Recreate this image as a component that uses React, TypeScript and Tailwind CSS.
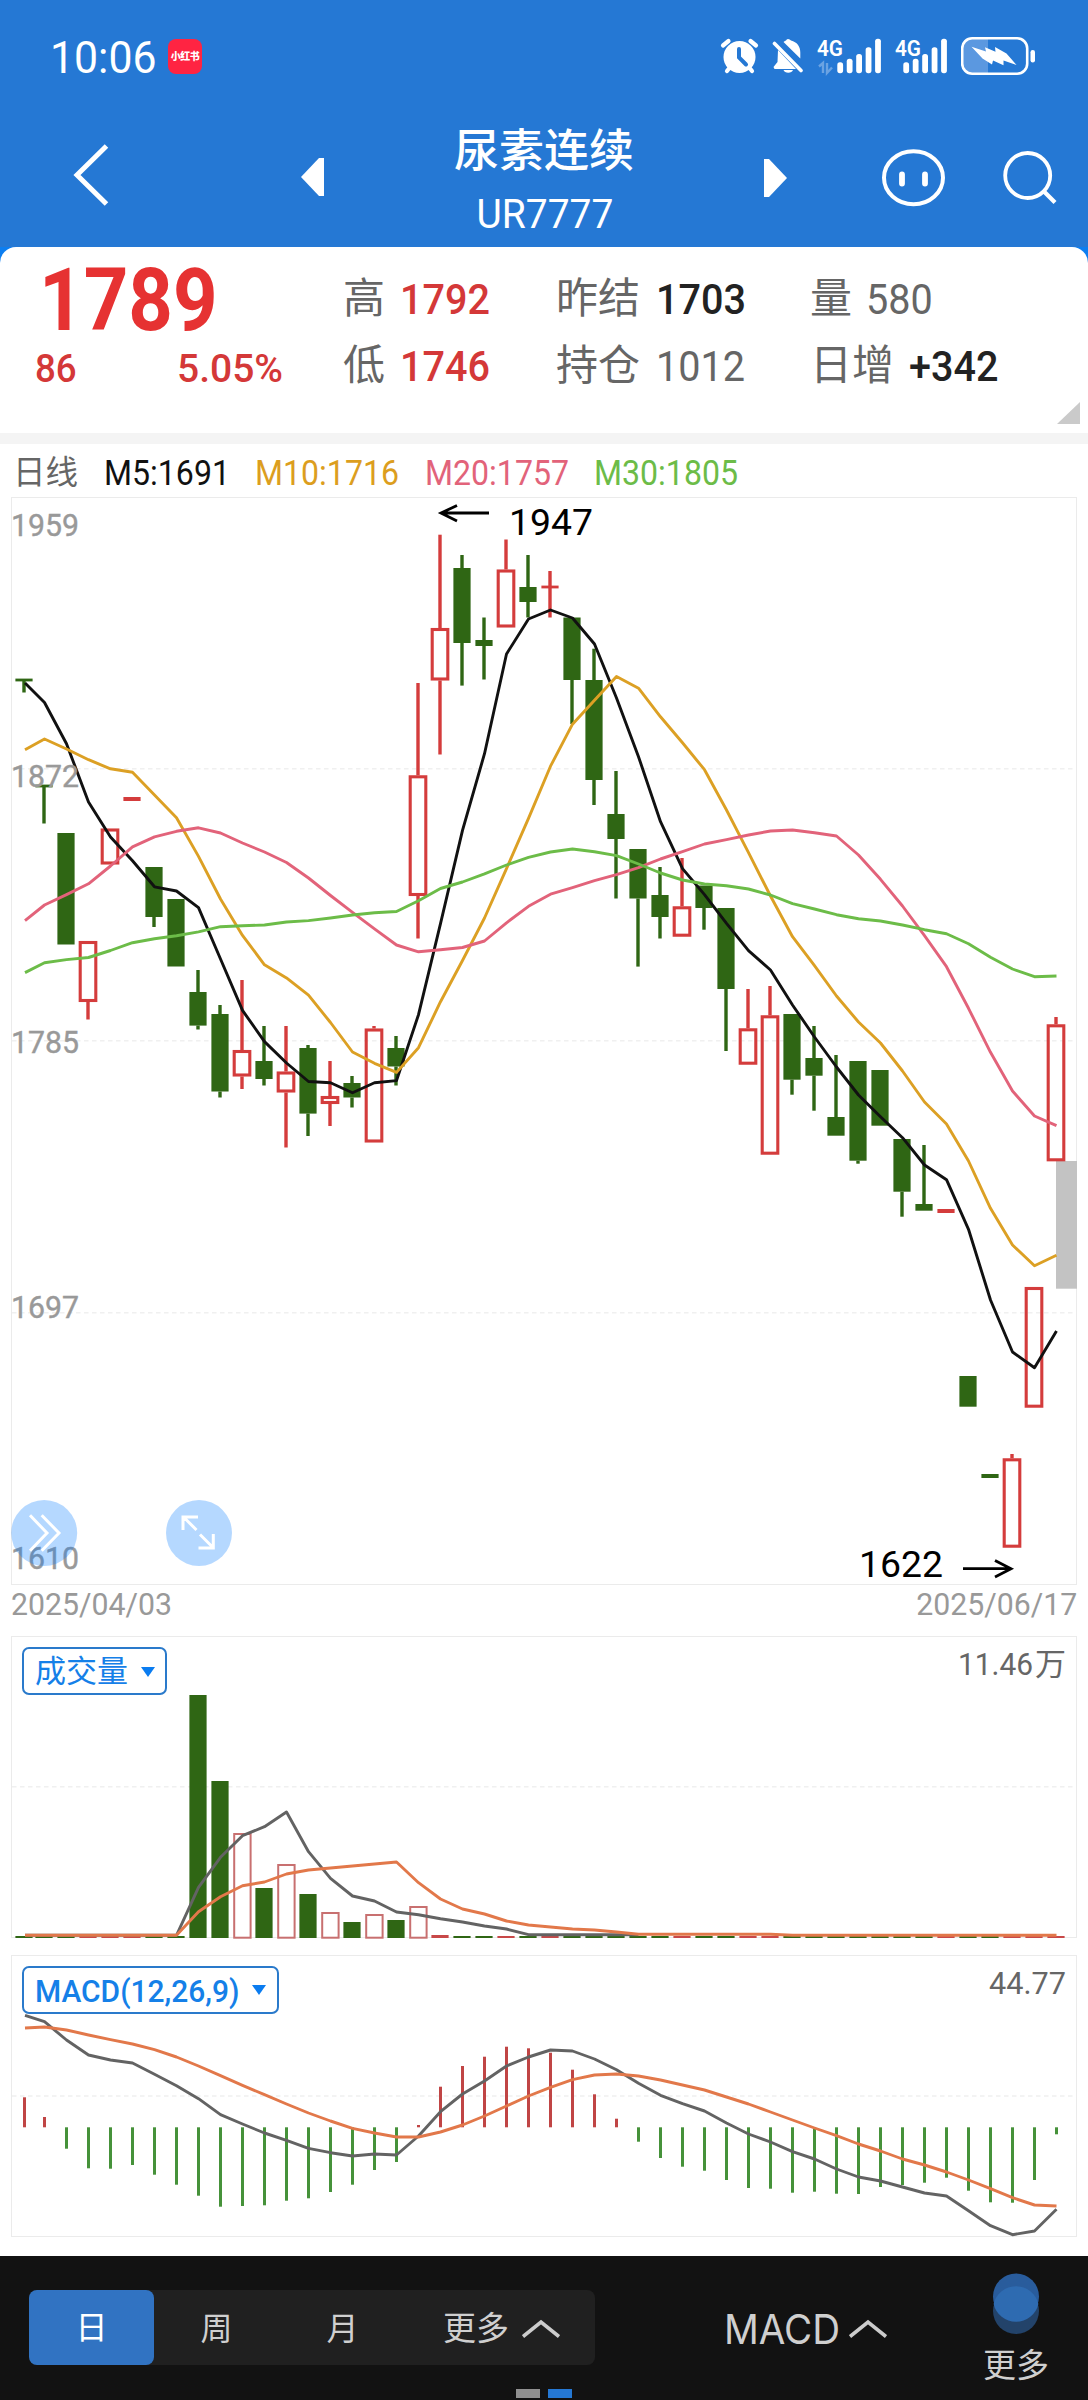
import React from "react";

const up = "#d43c3c";
const down = "#2f6614";

// Horizontal centre of the nth trading day.
const px = (i: number) => (i === 0 ? 24 : 22 + 22 * i);

// [isUp, high, bodyTop, bodyBottom, low] in chart pixels; bodyTop === bodyBottom is a flat day.
type Candle = [number, number, number, number, number];
const candles: Candle[] = [
  [0, 680, 680, 680, 692.5], [0, 786, 786, 786, 823.5], [0, 833, 833, 944.5, 944.5], [1, 941, 941, 1002, 1019.5],
  [1, 828.5, 828.5, 864.5, 864.5], [1, 799, 799, 799, 799], [0, 867, 867, 917, 927], [0, 899, 899, 966.5, 966.5],
  [0, 970, 992, 1025.6, 1029.5], [0, 1005, 1014, 1091.5, 1097.5], [1, 980, 1050, 1076.5, 1089], [0, 1026, 1061, 1079, 1085.5],
  [1, 1026, 1071.5, 1092.5, 1147.5], [0, 1045, 1048, 1113.6, 1136], [1, 1061, 1096, 1104, 1126], [0, 1076, 1083, 1097.5, 1107.5],
  [1, 1026, 1028.5, 1142.5, 1142.5], [0, 1036, 1048, 1066.5, 1085.5], [1, 683, 775.3, 896, 938.5], [1, 534.7, 628, 680.5, 754.5],
  [0, 555, 568, 643, 685.6], [0, 617.5, 640, 646, 679.5], [1, 539.5, 569.5, 627.5, 627.5], [0, 555, 587, 602, 617.5],
  [1, 571, 587, 587, 617.5], [0, 617.5, 617.5, 680, 724], [0, 648.7, 680, 780, 805], [0, 771, 814, 839, 898.5],
  [0, 849, 849, 898.5, 966.6], [0, 867, 895, 917, 938.5], [1, 858, 906.3, 936.7, 936.7], [0, 885.5, 885.5, 908, 929.7],
  [0, 908, 908, 989, 1051], [1, 989, 1028.3, 1064.7, 1064.7], [1, 986, 1015.3, 1154.7, 1154.7], [0, 1014, 1014, 1079.7, 1094.7],
  [0, 1026, 1058, 1075.7, 1110.7], [0, 1055, 1117, 1135.7, 1135.7], [0, 1061, 1061, 1160.7, 1163.7], [0, 1070, 1070, 1125.7, 1125.7],
  [0, 1139, 1139, 1191.7, 1216.7], [0, 1145, 1204, 1210.7, 1210.7], [1, 1211, 1211, 1211, 1211], [0, 1376, 1376, 1406.7, 1406.7],
  [0, 1476, 1476, 1476, 1476], [1, 1454, 1458.3, 1547.7, 1547.7], [1, 1287, 1287, 1407.7, 1407.7], [1, 1017, 1024.3, 1161.3, 1161.3],
];

const ma5 = [683, 702.5, 743.7, 802, 837, 860.8, 886.8, 891, 907.6, 959, 1010.4, 1041.6, 1063, 1081.5, 1082.8, 1092.8, 1082.8, 1080.6, 1014.7, 923.7, 830.4, 753.7, 654, 619, 610, 618, 644, 698, 756.7, 821.7, 868.6, 894.6, 923.3, 950.7, 970, 1005, 1037, 1067, 1095, 1116.7, 1137.7, 1165, 1179.7, 1229.3, 1300, 1352, 1367.7, 1331];
const ma10 = [749.8, 739, 749, 759.7, 768.8, 772.3, 794.9, 817.8, 856.4, 899, 935.4, 964.8, 977.9, 995.2, 1022.5, 1052, 1063.3, 1072.4, 1047.7, 1001.7, 960.5, 918, 868.6, 818.3, 766.2, 724.2, 700.3, 676.5, 688.2, 716.8, 742.8, 769.7, 810, 852.7, 896, 936.7, 965.7, 996, 1022, 1043, 1071, 1102, 1124, 1161, 1208.3, 1245, 1265.7, 1255.3];
const ma20 = [920.6, 905, 894.6, 883.8, 866, 846.9, 836.9, 831.3, 827.8, 833, 843, 852, 862.5, 878, 895.5, 912.4, 928.9, 945, 951.8, 949.7, 947.5, 941, 922.8, 906.3, 894.2, 887.7, 880.7, 874.6, 867.7, 859, 851.7, 844, 839.7, 835, 831, 830, 832.7, 836, 855, 879.3, 906, 935.7, 966.7, 1008.3, 1052.3, 1091, 1116, 1125.7];
const ma30 = [972.6, 962.7, 959.6, 957.5, 950.5, 942.7, 938.8, 935.8, 931.9, 926.7, 925.8, 925, 922, 920.6, 918, 915, 912.8, 911.5, 900.7, 888.5, 882, 873.8, 865, 857.3, 852, 849, 851.7, 855.6, 864, 873, 880, 884, 885.7, 889, 895, 903.7, 909, 914.7, 918.7, 921, 925, 929.7, 933.7, 943.7, 957.3, 969, 976.7, 976];

const volTops: Record<number, number> = { 8: 1695, 9: 1781, 10: 1833, 11: 1888, 12: 1864, 13: 1894, 14: 1912, 15: 1922, 16: 1914, 17: 1920, 18: 1906, 19: 1935 };
const volMa5 = [1935.3, 1935.3, 1935.3, 1935.3, 1935.3, 1935.3, 1935.3, 1935.3, 1887.3, 1857.3, 1835.7, 1826.7, 1812, 1851.7, 1878.3, 1896, 1901, 1912, 1914.7, 1918.7, 1922, 1926, 1929, 1934.7, 1934.7, 1934.7, 1934.7, 1934.7, 1934.7];
const volMa10 = [1935.3, 1935.3, 1935.3, 1935.3, 1935.3, 1935.3, 1935.3, 1935.3, 1911.7, 1896.7, 1885.7, 1882, 1874, 1870, 1868, 1866, 1864, 1862, 1882.7, 1899, 1909, 1914, 1921, 1925, 1927, 1929, 1930, 1932, 1934.3, 1934.3, 1934.3, 1934.3, 1934.3, 1934.3, 1934.3, 1935.3, 1935.3, 1935.3, 1935.3, 1935.3, 1935.3, 1935.3, 1935.3, 1935.3, 1935.3, 1935.3, 1935.3, 1935.3];

const zero = 2127.3;
const hist = [2097.3, 2117, 2148.7, 2168.3, 2168.7, 2165, 2174.7, 2184.7, 2195.7, 2206.7, 2206, 2205.3, 2200.7, 2198.3, 2192, 2184.7, 2170, 2162, 2125, 2086.7, 2066, 2056.7, 2046.7, 2048.3, 2052.7, 2069.7, 2094.3, 2118.7, 2141.7, 2158, 2166.7, 2170.7, 2180, 2188, 2188.7, 2192.7, 2191.7, 2193.7, 2194, 2187, 2185, 2182.7, 2177.7, 2190.7, 2202.3, 2202.7, 2180, 2134.3];
const dif = [2015.3, 2021.7, 2040, 2055, 2060, 2063, 2074.3, 2085.7, 2098.7, 2114.7, 2124, 2133, 2140.3, 2148.3, 2152.7, 2156, 2154, 2155, 2136, 2111.7, 2094, 2081, 2066, 2057, 2050, 2051, 2059, 2069.7, 2083.3, 2095.3, 2103.7, 2111, 2123, 2134, 2142, 2151.7, 2159, 2169, 2177, 2181, 2187, 2193, 2196, 2210.7, 2225.7, 2234.7, 2231, 2209.3];
const dea = [2028, 2027, 2030, 2035, 2039.7, 2044, 2049.7, 2057, 2066, 2075.7, 2085.3, 2094.7, 2104, 2113, 2121, 2128.3, 2133, 2137, 2137, 2132, 2125, 2116, 2106, 2096, 2087.3, 2079.7, 2075, 2074, 2076, 2080, 2085, 2090, 2097, 2104, 2112, 2120, 2128, 2135.7, 2144, 2151, 2159, 2165, 2172, 2180, 2188.7, 2197.7, 2205, 2206];

function Line({ data, color, width = 2.9 }: { data: number[]; color: string; width?: number }) {
  return (
    <polyline
      points={data.map((y, i) => `${px(i) + (i === 0 ? 1 : 0.5)},${y}`).join(" ")}
      fill="none"
      stroke={color}
      strokeWidth={width}
      strokeLinejoin="round"
    />
  );
}

function Frame({ top, bottom, grid }: { top: number; bottom: number; grid: number[] }) {
  return (
    <g fill="none" stroke="#ebebeb">
      <rect x={11.5} y={top} width={1065} height={bottom - top} />
      {grid.map((y) => (
        <line key={y} x1={12} x2={1076} y1={y} y2={y} strokeDasharray="4.5 3.5" stroke="#f0f0f0" strokeWidth={1.5} />
      ))}
    </g>
  );
}

function Label({ x, y, w, size, color, children }: { x: number; y: number; w: number; size: number; color: string; children: string }) {
  return (
    <text x={x} y={y} textLength={w} lengthAdjust="spacingAndGlyphs" fontSize={size} fill={color}>
      {children}
    </text>
  );
}

function Bar({ c, i }: { c: Candle; i: number }) {
  const [isUp, high, top, bottom, low] = c;
  const x = px(i);
  const color = isUp ? up : down;
  const wick = 3.4;
  if (top === bottom) {
    const thick = high === low ? 4 : 2.8;
    return (
      <g stroke={color}>
        <line x1={x - 8.6} x2={x + 8.6} y1={top} y2={top} strokeWidth={thick} />
        {high !== low && <line x1={x} x2={x} y1={high} y2={low} strokeWidth={wick} />}
      </g>
    );
  }
  return (
    <g>
      {high < top && <line x1={x} x2={x} y1={high} y2={top} stroke={color} strokeWidth={wick} />}
      {low > bottom && <line x1={x} x2={x} y1={bottom} y2={low} stroke={color} strokeWidth={wick} />}
      {isUp ? (
        <rect x={x - 7.8} y={top + 1.5} width={15.6} height={bottom - top - 3} fill="none" stroke={color} strokeWidth={3.1} />
      ) : (
        <rect x={x - 8.6} y={top} width={17.2} height={bottom - top} fill={color} />
      )}
    </g>
  );
}

function PriceChart() {
  return (
    <svg className="block h-[1090px] w-[1088px]" viewBox="0 496 1088 1090">
      <Frame top={497.5} bottom={1584.5} grid={[768.8, 1040.7, 1312.7]} />
      <rect x={1056} y={1161} width={21} height={127.7} fill="#c3c3c3" />
      {candles.map((c, i) => (
        <Bar key={i} c={c} i={i} />
      ))}
      <Line data={ma5} color="#111111" />
      <Line data={ma10} color="#dca024" />
      <Line data={ma20} color="#e2637a" />
      <Line data={ma30} color="#6cbc48" />
      <g stroke="#999" strokeWidth={0.4}>
        <Label x={11} y={535.5} w={68} size={32} color="#999">1959</Label>
        <Label x={11} y={787} w={68} size={32} color="#999">1872</Label>
        <Label x={11} y={1053} w={68} size={32} color="#999">1785</Label>
        <Label x={11} y={1318} w={68} size={32} color="#999">1697</Label>
        <Label x={11} y={1568.5} w={68} size={32} color="#999">1610</Label>
      </g>
      <Label x={509} y={534.7} w={84} size={36.5} color="#000">1947</Label>
      <Label x={859} y={1576.7} w={84} size={36.5} color="#000">1622</Label>
      <g stroke="#000" strokeWidth={2.8} fill="none">
        <path d="M489 513H441M457 505.5L441 513L457 521" />
        <path d="M963 1568.7H1011M995 1560.5L1011 1568.7L995 1577" />
      </g>
      <g fill="#007aff" fillOpacity={0.29}>
        <circle cx={44.2} cy={1533} r={33} />
        <circle cx={199} cy={1533} r={33} />
      </g>
      <g stroke="#fff" strokeWidth={3} fill="none">
        <path d="M30 1515.3L47 1533L30 1550.7M41.7 1515.3L59 1533L41.7 1550.7" />
        <path d="M196.5 1530L183.5 1517M198 1517H183V1530M200 1534.5L213 1547.5M198.5 1548H213.3V1534" />
      </g>
    </svg>
  );
}

function VolumeChart() {
  return (
    <svg className="block h-[319px] w-[1088px]" viewBox="0 1635 1088 319">
      <Frame top={1636.5} bottom={1937.5} grid={[1786.7]} />
      {candles.map((c, i) => {
        const top = volTops[i] ?? 1936;
        const x = px(i);
        return c[0] && 1937.7 - top > 6 ? (
          <rect key={i} x={x - 7.8} y={top + 1} width={16.4} height={1936.7 - top} fill="none" stroke="#c87070" strokeWidth={2} />
        ) : (
          <rect key={i} x={x - 8.6} y={top} width={17.2} height={1938 - top} fill={c[0] ? "#c84848" : down} />
        );
      })}
      <Line data={volMa5} color="#636363" />
      <Line data={volMa10} color="#e2784a" />
      <Label x={958} y={1675} w={75} size={31.5} color="#666">11.46</Label>
      <text x={1035} y={1675} fontSize={31} fill="#666">万</text>
    </svg>
  );
}

function MacdChart() {
  return (
    <svg className="block h-[302px] w-[1088px]" viewBox="0 1954 1088 302">
      <Frame top={1955.5} bottom={2236.5} grid={[2096]} />
      {hist.map((y, i) => (
        <rect key={i} x={px(i) - 1} y={Math.min(y, zero)} width={3} height={Math.abs(y - zero)} fill={y < zero ? "#c04545" : "#46923a"} />
      ))}
      <Line data={dif} color="#636363" />
      <Line data={dea} color="#e2784a" />
      <Label x={989} y={1993.7} w={77} size={31.5} color="#666">44.77</Label>
    </svg>
  );
}

function Signal({ dim }: { dim?: boolean }) {
  const tops = [62.3, 58.7, 54, 47.3, 38.7];
  const x0 = dim ? 836.3 : 824.3;
  return (
    <svg className="h-[50px] w-[66px]" viewBox="816 30 66 50">
      <text x={816} y={55.5} fontSize={22.5} fontWeight={600} fill="#fff" textLength={26} lengthAdjust="spacingAndGlyphs">4G</text>
      {tops.map((t, i) => (
        <rect key={i} x={x0 + i * 9.45} y={t} width={5.8} height={73.2 - t} rx={2.6} fill="#fff" />
      ))}
      {dim && <path d="M818 66.5L822 63V73M826 63V73L831 67.5" fill="none" stroke="#6ba3e2" strokeWidth={2.4} />}
    </svg>
  );
}

function StatusBar() {
  return (
    <div className="flex h-[110px] items-start pt-[30px] text-white">
      <div className="ml-[50px] w-[118px]">
        <div className="origin-left scale-x-[0.95] whitespace-nowrap text-[45px] leading-[55px]">10:06</div>
      </div>
      <div className="mt-[9px] flex h-[35px] w-[34px] items-center justify-center rounded-[8px] bg-[#ff2442] text-[10px] font-black tracking-[-0.5px]">小红书</div>
      <svg className="ml-[517px] h-[50px] w-[40px]" viewBox="719 30 40 50">
        <circle cx={739.5} cy={57} r={16} fill="#fff" />
        <path d="M723 45.5L728.5 41M756 45.5L750.5 41M727 71L731 66M752 71L748 66" stroke="#fff" strokeWidth={4.2} strokeLinecap="round" />
        <path d="M739 49V57.5L746 64.5" stroke="#2578d4" strokeWidth={4} strokeLinecap="round" fill="none" />
      </svg>
      <svg className="ml-[13px] h-[50px] w-[32px]" viewBox="772 30 32 50">
        <path d="M788 39a4 4 0 0 1 3 1.500c6 1.500 9.300 6 9.300 12V58.500L783.500 42c1-.7 1.800-1.200 2.500-1.500q.5-1.500 2-1.500ZM778 50L796 69H774.500L773.500 67L777.500 62ZM783.500 70H793a5 4 0 0 1-9.500 0Z" fill="#fff" />
        <path d="M774.500 43.500L801 70.500" stroke="#fff" strokeWidth={3.6} strokeLinecap="round" />
      </svg>
      <div className="ml-[13px]"><Signal dim /></div>
      <div className="ml-[12px]"><Signal /></div>
      <svg className="h-[50px] w-[80px]" viewBox="960 30 80 50">
        <path d="M987 39H971q-9.500 0-9.500 9.500V64q0 9.500 9.500 9.500H987Z" fill="#5b98e0" />
        <rect x={961.2} y={38.3} width={65} height={35.4} rx={10} fill="none" stroke="#fff" strokeWidth={2.6} />
        <rect x={1029.5} y={50} width={4.5} height={12.5} rx={2.2} fill="#fff" />
        <path d="M970.500 46.800L985 51.500L984 47.200L994.500 51.800L994 47L1005.500 53.500L1015.500 65L1002.500 60.500L1002.500 65.200L992 60.500L991 64.500L981.500 58.500Z" fill="#fff" />
      </svg>
    </div>
  );
}

function NavBar() {
  return (
    <div className="flex h-[137px] text-white">
      <svg className="ml-[70px] h-[137px] w-[42px]" viewBox="70 110 42 137">
        <path d="M106.500 146L77 175L106.500 204" fill="none" stroke="#fff" strokeWidth={5} />
      </svg>
      <svg className="ml-[186px] h-[137px] w-[30px]" viewBox="298 110 30 137">
        <path d="M324 158H319L301 177L319 196H324Z" fill="#fff" />
      </svg>
      <div className="ml-[116px] flex w-[200px] flex-col items-center">
        <div className="mt-[15px] whitespace-nowrap text-[45px] font-medium leading-[54px]">尿素连续</div>
        <div className="mt-[11px] scale-x-[0.95] whitespace-nowrap pl-[2px] text-[41px] leading-[49px]">UR7777</div>
      </div>
      <svg className="ml-[116px] h-[137px] w-[30px]" viewBox="760 110 30 137">
        <path d="M764 159H769L787 178L769 197H764Z" fill="#fff" />
      </svg>
      <svg className="ml-[90px] h-[137px] w-[67px]" viewBox="880 110 67 137">
        <ellipse cx={913.5} cy={177.7} rx={29.5} ry={26.5} fill="none" stroke="#fff" strokeWidth={4} />
        <path d="M902 174.500V183.500M925 174.500V183.500" stroke="#fff" strokeWidth={5.8} strokeLinecap="round" />
      </svg>
      <svg className="ml-[53px] h-[137px] w-[60px]" viewBox="1000 110 60 137">
        <circle cx={1027.7} cy={175.5} r={22.5} fill="none" stroke="#fff" strokeWidth={3.8} />
        <path d="M1043.500 191L1055 202.500" stroke="#fff" strokeWidth={4.2} />
      </svg>
    </div>
  );
}

function Stat({ label, value, labelClass, tone }: { label: string; value: string; labelClass: string; tone: string }) {
  return (
    <div className="flex h-[67px] items-center whitespace-nowrap">
      <span className={`${labelClass} text-[42px] text-[#666]`}>{label}</span>
      <span className={`${tone} origin-left scale-x-[0.92] pt-[1px] text-[43px]`}>{value}</span>
    </div>
  );
}

function Quote() {
  return (
    <div className="bg-[#0d7ef0]">
      <div className="relative flex h-[186px] rounded-t-[16px] bg-white pt-[18px]">
        <div className="w-[343px]">
          <div className="ml-[39px] h-[69px] origin-left scale-x-[0.895] text-[87px] font-bold leading-[70px] text-[#e63232]">1789</div>
          <div className="flex h-[66px] items-start pt-[11px] text-[39px] font-medium leading-[48px] text-[#d43838]">
            <div className="ml-[35px] w-[142px]"><div className="origin-left scale-x-[0.94]">86</div></div>
            <div className="origin-left">5.05%</div>
          </div>
        </div>
        <div className="w-[213px]">
          <Stat label="高" value="1792" labelClass="w-[57px]" tone="text-[#d43838] font-medium" />
          <Stat label="低" value="1746" labelClass="w-[57px]" tone="text-[#d43838] font-medium" />
        </div>
        <div className="w-[254px]">
          <Stat label="昨结" value="1703" labelClass="w-[100px]" tone="text-[#222] font-medium" />
          <Stat label="持仓" value="1012" labelClass="w-[100px]" tone="text-[#666]" />
        </div>
        <div>
          <Stat label="量" value="580" labelClass="w-[56px]" tone="text-[#666]" />
          <Stat label="日增" value="+342" labelClass="w-[99px]" tone="text-[#222] font-medium" />
        </div>
        <svg className="absolute bottom-[9px] right-[8px] h-[22px] w-[23px]" viewBox="0 0 23 22">
          <path d="M23 0V22H0Z" fill="#cacaca" />
        </svg>
      </div>
    </div>
  );
}

function Averages() {
  return (
    <div className="flex h-[52px] items-center whitespace-nowrap pt-[6px] text-[34.5px] leading-[42px]">
      <span className="ml-[13px] w-[91px] text-[32.5px] text-[#666]">日线</span>
      <span className="w-[151px]"><span className="block origin-left scale-x-[0.93] text-[#111]">M5:1691</span></span>
      <span className="w-[170px]"><span className="block origin-left scale-x-[0.93] text-[#dc9e1e]">M10:1716</span></span>
      <span className="w-[169px]"><span className="block origin-left scale-x-[0.93] text-[#e2637a]">M20:1757</span></span>
      <span className="w-[150px]"><span className="block origin-left scale-x-[0.93] text-[#6cbc48]">M30:1805</span></span>
    </div>
  );
}

function Caret() {
  return (
    <svg className="h-[10px] w-[14px] shrink-0" viewBox="0 0 14 10">
      <path d="M0 0H14L7 10Z" fill="#0a7cf0" />
    </svg>
  );
}

function Chevron() {
  return (
    <svg className="h-[20px] w-[38px] shrink-0" viewBox="0 0 38 20">
      <path d="M1 17.500L19 3L37 17.500" fill="none" stroke="#ccc" strokeWidth={3.6} />
    </svg>
  );
}

function BottomBar() {
  return (
    <div className="relative flex h-[144px] bg-[#121212] text-[#cfcfcf]">
      <div className="ml-[29px] mt-[34px] flex h-[75px] w-[566px] items-center rounded-[8px] bg-[#202020] text-[32px] leading-[48px]">
        <div className="flex h-[75px] w-[125px] items-center justify-center rounded-[8px] bg-[#3173c2] pt-[1px] text-white">日</div>
        <div className="w-[125px] pt-[2px] text-center">周</div>
        <div className="w-[127px] pt-[2px] text-center">月</div>
        <div className="ml-[37px] flex items-center gap-[13px] pt-[2px] text-[33px]">
          更多
          <Chevron />
        </div>
      </div>
      <div className="ml-[129px] mt-[48px] flex h-[50px] w-[218px] items-center">
        <div className="w-[125px]"><div className="origin-left scale-x-[0.94] font-['Inter',sans-serif] text-[41px] leading-[50px]">MACD</div></div>
        <Chevron />
      </div>
      <div className="ml-[40px] flex w-[68px] flex-col items-center pt-[17px]">
        <svg className="h-[62px] w-[48px]" viewBox="0 0 48 62">
          <circle cx={24} cy={38} r={23} fill="#23436a" />
          <circle cx={24} cy={23.5} r={23} fill="#295c9c" />
          <path d="M1.600 31A23 23 0 0 1 46.400 31A23 23 0 0 1 1.600 31Z" fill="#2e6bb1" />
        </svg>
        <div className="mt-[7px] whitespace-nowrap text-[33px] leading-[48px]">更多</div>
      </div>
      <div className="absolute bottom-[2px] left-[516px] flex gap-[8px]">
        <div className="h-[9px] w-[24px] bg-[#909090]" />
        <div className="h-[9px] w-[24px] bg-[#2578d4]" />
      </div>
    </div>
  );
}

export default function App() {
  return (
    <div className="h-[2400px] w-[1088px] overflow-hidden bg-white font-['Roboto','Noto_Sans_CJK_SC',sans-serif]">
      <div className="bg-[#2578d4]">
        <StatusBar />
        <NavBar />
      </div>
      <Quote />
      <div className="h-[11px] bg-[#f4f4f4]" />
      <Averages />
      <PriceChart />
      <div className="flex h-[49px] justify-between px-[11px] text-[32px] leading-[37px] text-[#999]">
        <span className="origin-left scale-x-[0.945]">2025/04/03</span>
        <span className="origin-right scale-x-[0.945]">2025/06/17</span>
      </div>
      <div className="relative">
        <VolumeChart />
        <button className="absolute left-[22px] top-[12px] flex h-[48px] w-[145px] items-center gap-[13px] rounded-[7px] border-2 border-[#2a7acb] bg-white pl-[11px] pt-[2px] text-[31px] text-[#1580e8]">
          成交量
          <Caret />
        </button>
      </div>
      <div className="relative">
        <MacdChart />
        <button className="absolute left-[22px] top-[12px] flex h-[48px] w-[257px] items-center rounded-[7px] border-2 border-[#2a7acb] bg-white pl-[11px] text-left text-[31.5px] text-[#1580e8]">
          <span className="w-[217px] pt-[3px]"><span className="block origin-left scale-x-[0.95] whitespace-nowrap font-medium">MACD(12,26,9)</span></span>
          <Caret />
        </button>
      </div>
      <BottomBar />
    </div>
  );
}
